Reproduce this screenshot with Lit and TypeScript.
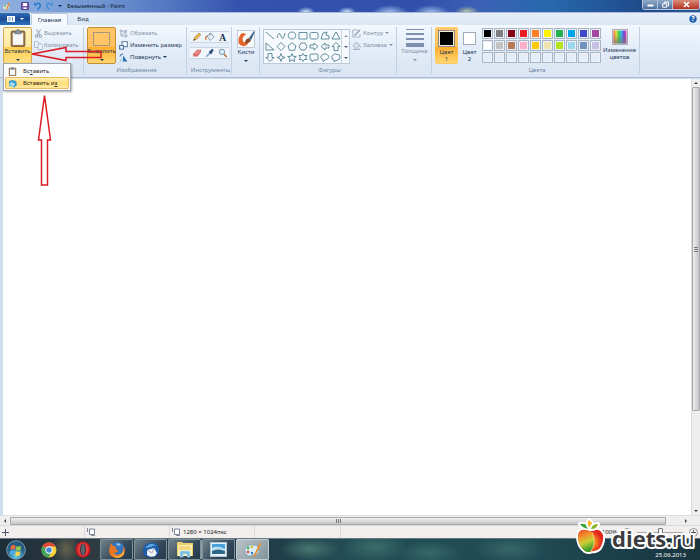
import { LitElement, html, svg, css } from "lit";
import { customElement } from "lit/decorators.js";
import { styleMap } from "lit/directives/style-map.js";

const ROW1 = ["#000000", "#7f7f7f", "#880015", "#ed1c24", "#ff7f27", "#fff200", "#22b14c", "#00a2e8", "#3f48cc", "#a349a4"];
const ROW2 = ["#ffffff", "#c3c3c3", "#b97a57", "#ffaec9", "#ffc90e", "#efe4b0", "#b5e61d", "#99d9ea", "#7092be", "#c8bfe7"];
const ROW3 = Array(10).fill("#e3ecf7");

const icon = (w: number, h: number, body: unknown) =>
  html`<svg width=${w} height=${h} viewBox="0 0 ${w} ${h}" aria-hidden="true">${body}</svg>`;

const clipboard = (w: number, h: number) => html`<svg width=${w} height=${h} viewBox="0 0 15 17" aria-hidden="true">
  <rect x="1" y="2" width="13" height="14.5" rx="1" fill="#a07848" stroke="#705634" stroke-width=".8"/>
  <rect x="2.6" y="3.6" width="9.8" height="11.4" fill="#f6f8fb"/>
  <path d="M4.5 4.5V2H6C6 0 9 0 9 2h1.5v2.5z" fill="#8b949f" stroke="#59616b" stroke-width=".6"/></svg>`;

const cut = icon(9, 9, svg`<path d="M2.500 .5L5.800 6M6.500 .5L3.200 6" stroke="#8d9db1" stroke-width="1" fill="none"/><circle cx="2.600" cy="7.100" r="1.300" fill="none" stroke="#8d9db1"/><circle cx="6.400" cy="7.100" r="1.300" fill="none" stroke="#8d9db1"/>`);
const copy = icon(9, 9, svg`<path d="M.5 .5h3l1.500 1.500v4.500h-4.500z" fill="#edf2f8" stroke="#9fb0c5" stroke-width=".8"/><path d="M4 2.800h3l1.500 1.500v4.200H4z" fill="#edf2f8" stroke="#9fb0c5" stroke-width=".8"/>`);
const crop = icon(9, 9, svg`<path d="M2 .5V7h6.500M.5 2H7v6.500M3 6l5-5" fill="none" stroke="#91a2b8" stroke-width=".9"/>`);
const resize = icon(9, 9, svg`<rect x="3" y=".7" width="5.300" height="5" fill="#fff" stroke="#45698f" stroke-width=".9"/><rect x=".6" y="4.500" width="4" height="3.700" fill="#d9e9f7" stroke="#45698f" stroke-width=".9"/>`);
const rotate = icon(9, 9, svg`<path d="M4 8.500V2.500L8.500 8.500z" fill="#2870b5"/><path d="M.5 8.500H3V4z" fill="#a9cbe8"/><path d="M1 3.500Q1 .8 4 1" fill="none" stroke="#315f8f" stroke-width=".9"/>`);
const outline = icon(9, 9, svg`<path d="M6 1H.8v7H8V5" fill="none" stroke="#a0adbd" stroke-width=".9"/><path d="M2.500 6.500L8 1" stroke="#8798ad" stroke-width="1.200"/>`);
const fill = icon(9, 9, svg`<path d="M1 4.500L4.500 1l3 3.200L4 7.500z" fill="#dbe3ec" stroke="#94a4b8" stroke-width=".8"/><path d="M1 8.300h7M7.500 4.500l1 2" stroke="#94a4b8" stroke-width="1"/>`);

const tools = [
  ["Карандаш", svg`<path d="M1.500 8.500l1-2.800L7 1l1.800 1.700L4.200 7.500z" fill="#f2bd45" stroke="#84652c" stroke-width=".6"/><path d="M1.500 8.500l.7-1.800 1 1z" fill="#333"/>`],
  ["Заливка цветом", svg`<path d="M2 4l4-3 3 4-4 3.500z" fill="#e9eff5" stroke="#6f859d" stroke-width=".7"/><path d="M2.200 4.200C.5 4.500.5 6 1 8" stroke="#d9763b" stroke-width="1.300" fill="none"/><path d="M5 1v3" stroke="#67798c" stroke-width=".7"/>`],
  ["Текст", svg`<text x="1" y="9" font-size="10" font-weight="bold" font-family="Liberation Serif, serif" fill="#203b57">A</text>`],
  ["Ластик", svg`<path d="M1 6.500L5 2h4L5.500 6.500z" fill="#f28d85" stroke="#b65b59" stroke-width=".6"/><path d="M1 6.500h4.500V8.500H1.500zM5.500 6.500L9 2v2L5.500 8.500z" fill="#d96565"/>`],
  ["Палитра", svg`<path d="M1.200 8.800L5.500 4.500" stroke="#7aa0c2" stroke-width="1.500"/><path d="M4.500 3.200l2.300 2.300M5.500 4L8 1.600" stroke="#244d7d" stroke-width="2.200"/>`],
  ["Масштаб", svg`<circle cx="4" cy="3.800" r="2.700" fill="#d6edfb" stroke="#6e8aa4" stroke-width=".9"/><path d="M6 6l2.800 3" stroke="#a96c38" stroke-width="1.500"/>`],
] as const;

const shapes: string[] = [
  "M1 1L9 8", "M1 7Q3-1 5 5T9 2", "M5 1C10 1 10 8 5 8S0 1 5 1z", "M1 1.500h8v6.500H1z", "M2.500 1.500h5q1.500 0 1.500 1.500v3.500q0 1.500-1.500 1.500h-5q-1.500 0-1.500-1.500V3q0-1.500 1.500-1.500z", "M1 8L3 2l4-1-1 3 3 1v3z", "M5 1L9 8H1z",
  "M1 1v7h8z", "M5 .5L9 4.500 5 8.500 1 4.500z", "M5 .7L9 4 7.500 8.300h-5L1 4z", "M3 1h4l2 3.500L7 8H3L1 4.500z", "M1 3h4V1l4 3.500L5 8V6H1z", "M9 3H5V1L1 4.500 5 8V6h4z", "M3 8.500v-4H1L5 .5l4 4H7v4z",
  "M3 .5v4H1l4 4 4-4H7v-4z", "M5 .5L6 3.500 9 4.500 6 5.500 5 8.500 4 5.500 1 4.500 4 3.500z", "M5 .5L6.200 3.300 9.300 3.500 7 5.500 7.700 8.500 5 7 2.300 8.500 3 5.500 .7 3.500 3.800 3.300z", "M5 .5L6.200 2.500H9L7.700 4.500 9 6.500H6.200L5 8.500 3.800 6.500H1L2.300 4.500 1 2.500H3.800z", "M2 1h6q1 0 1 1v4q0 1-1 1H5L3 8.700V7H2Q1 7 1 6V2q0-1 1-1z", "M3 8.500V6.700C-1 5 1 1 5 1s6 4.500 0 6z", "M3 8.500V7Q1 7 1 5 0 3 2.500 2 4 0 6 1.300 9 1 9 4 9.500 7 6.500 7 5 8 3 8.500z",
];

const caret = html`<i class="caret"></i>`;

@customElement("app-root")
export class AppRoot extends LitElement {
  static styles = css`
    :host { display: flex; flex-direction: column; position: relative; min-height: 100vh; overflow: hidden; background: #cfdcec;
      font: 6px/8px "Noto Sans", "Open Sans", sans-serif; color: #1e395b; }
    * { box-sizing: border-box; }
    svg { display: block; flex: none; }
    button { font: inherit; color: inherit; background: none; border: 0; padding: 0; margin: 0; display: flex; align-items: center; white-space: nowrap; }
    .caret { width: 0; height: 0; border: 2px solid transparent; border-top-color: currentColor; border-bottom: 0; flex: none; }
    .title { display: flex; height: 12px; padding-left: 2px; gap: 4px; align-items: center; color: #101a30;
      background: radial-gradient(ellipse 9px 5px at 306px 12px, #d2e8fb, transparent), radial-gradient(ellipse 9px 5px at 347px 12px, #d2e8fb, transparent), radial-gradient(ellipse 18px 8px at 390px 13px, #a6c6ed, transparent), radial-gradient(ellipse 18px 8px at 431px 13px, #a6c6ed, transparent), radial-gradient(ellipse 12px 6px at 467px 12px, #bdc7a2, transparent), linear-gradient(90deg, #8fb0e0 0, #7095d2 14%, #5377c2 24%, #3453ae 34%, #3150aa 60%, #3c60b5 68%, #2869ae 78%, #1f4a8b 92%, #2c5793); }
    .title h1 { font: inherit; margin: 0; }
    .quick { display: flex; align-items: center; gap: 5px; width: 61px; color: #17294d; }
    .window { display: flex; margin-left: auto; align-self: flex-start; border: 1px solid #b6c6dd; border-top: 0; border-radius: 0 0 3px 3px; overflow: hidden; }
    .window button { width: 15px; height: 9px; justify-content: center; background: linear-gradient(#93abc9, #4d6f9e); border-right: 1px solid #b6c6dd; }
    .window .close { width: 26px; border: 0; background: linear-gradient(#d98a79, #b6331f); }
    .tabs { display: flex; height: 13px; align-items: stretch; background: linear-gradient(#e6eef9, #dbe6f4); border-top: 1px solid #a7bbd9; padding-right: 3px; }
    .tabs button { justify-content: center; }
    .file { width: 30px; gap: 5px; color: #fff; background: linear-gradient(#2f6cb8, #1c4b94 50%, #2a75c0); border-radius: 0 2px 0 0; }
    .tabs .active { width: 37px; margin-left: 1px; background: #f6fafe; border: 1px solid #bccce0; border-bottom: 0; border-radius: 2px 2px 0 0; }
    .tabs .view { width: 30px; }
    .tabs .help { margin-left: auto; }
    .ribbon { display: grid; grid-template-columns: 84px 103px 45px 28px 137px 35px 208px 1fr; height: 53px; padding: 2px 0 3px; border-bottom: 1px solid #aebfd5;
      background: linear-gradient(#f3f8fd, #e3ecf8 45%, #dae5f3); }
    .group { display: flex; flex-direction: column; border-right: 1px solid #c3d0e1; padding-left: 3px; min-width: 0; }
    .group:last-child { border: 0; }
    .row { display: flex; flex: 1; }
    .name { text-align: center; color: #7288a5; }
    .big { flex-direction: column; width: 29px; height: 37px; border: 1px solid transparent; border-radius: 2px; }
    .big .caret { margin-top: 4px; }
    .hot { border-color: #d3a858; background: linear-gradient(#fff3bd 0, #ffe9a0 54%, #ffce4f 55%, #ffe082); padding-top: 1px; }
    .on { border-color: #c68d34; background: linear-gradient(#ffc669 0, #ffbf5d 54%, #ffad2f 55%, #ffd66f); padding-top: 2px; }
    .stack { display: flex; flex-direction: column; padding-left: 3px; }
    .stack button { height: 12px; gap: 2px; }
    .near { padding-left: 2px; }
    .near button { gap: 1px; }
    button:disabled, .dim { color: #8492a6; }
    .tools { display: grid; grid-template-columns: repeat(3, 13px); grid-auto-rows: 12px; row-gap: 4px; padding-top: 4px; align-content: start; }
    .tools button { justify-content: center; background: #f0f5fb; border: solid #c9d5e3; border-width: 1px 0; }
    .brush { padding-top: 2px; width: 22px; }
    .gallery { display: flex; align-self: flex-start; margin-top: 2px; border: 1px solid #bac9dc; background: #f7fafd; }
    .grid { display: grid; grid-template-columns: repeat(7, 11px); grid-auto-rows: 11px; }
    .grid button { justify-content: center; }
    .scroll { display: flex; flex-direction: column; justify-content: space-around; align-items: center; width: 8px; border-left: 1px solid #c9d5e3; color: #4b5f78; }
    .fills { margin-left: 1px; padding-left: 1px; }
    .lines { display: flex; flex-direction: column; gap: 3px; width: 18px; height: 18px; margin-top: 1px; }
    .lines i { background: #7f90ae; height: 1px; }
    .lines i:nth-child(2) { height: 2px; } .lines i:nth-child(3) { height: 3px; } .lines i:nth-child(4) { height: 4px; }
    .thick { width: 29px; }
    .color { flex-direction: column; width: 23px; height: 37px; border: 1px solid transparent; padding-top: 2px; line-height: 7px; border-radius: 2px; white-space: normal; }
    .color i { width: 17px; height: 17px; border: 1px solid #888; outline: 1px solid #f7ecd0; outline-offset: -2px; background: #000; margin-bottom: 2px; flex: none; }
    .color.second i { width: 13px; height: 13px; margin: 2px 2px 4px; background: #fff; outline: 0; border-color: #a0aab9; }
    .palette { display: grid; grid-template-columns: repeat(10, 11px); grid-auto-rows: 11px; gap: 1px; margin: 1px 1px 0 1px; align-content: start; }
    .palette button { border: 1px solid #a8b5c5; box-shadow: inset 0 0 0 1px #edf2f8; }
    .edit { flex-direction: column; width: 35px; padding-top: 2px; white-space: normal; }
    .edit span { margin-top: 2px; line-height: 7px; }
    .work { display: flex; flex: 1; margin-top: 1px; }
    .canvas { flex: 1; background: #fff; margin-left: 3px; }
    .vbar { display: flex; flex-direction: column; align-items: center; width: 9px; background: #eeeeef; border-left: 1px solid #dcdcdf; color: #444; }
    .arrow { display: flex; align-items: center; justify-content: center; width: 8px; height: 8px; }
    .vbar .thumb { flex: 1; width: 8px; margin-bottom: 96px; border: 1px solid #a9a9ad; border-radius: 1px; background: linear-gradient(90deg, #efeff0, #d8d8da 55%, #c3c3c8); display: flex; align-items: center; justify-content: center; }
    .up { transform: rotate(180deg); } .left { transform: rotate(90deg); } .right { transform: rotate(-90deg); }
    .hbar { display: flex; height: 10px; align-items: center; background: #eeeeef; border-top: 1px solid #dedee0; color: #444; padding: 0 10px 0 1px; }
    .hbar .thumb { flex: 1; height: 8px; margin: 0 16px 0 1px; border: 1px solid #a9a9ad; border-radius: 1px; background: linear-gradient(#efeff0, #d8d8da 55%, #c3c3c8); display: flex; align-items: center; justify-content: center; }
    .status { display: grid; grid-template-columns: 85px 85px 85px 86px 1fr; height: 13px; background: #f1eeed; border-top: 1px solid #d9d7d7; color: #222; }
    .status > * { display: flex; align-items: center; gap: 3px; border-right: 1px solid #dcd9d9; padding-left: 2px; }
    .status > .zoom { border: 0; justify-content: flex-end; gap: 6px; padding-right: 2px; }
    input { appearance: none; width: 46px; height: 9px; margin: 0; background: linear-gradient(#aaa, #aaa) center / 100% 1px no-repeat; }
    input::-webkit-slider-thumb { appearance: none; width: 5px; height: 9px; border: 1px solid #777; background: #f4f4f4; border-radius: 1px; }
    .taskbar { display: flex; height: 22px; align-items: center; gap: 1px; border-top: 1px solid #65777f; padding-right: 14px;
      background: radial-gradient(ellipse 30px 12px at 310px 10px, #47766f, transparent), radial-gradient(ellipse 32px 14px at 375px 8px, #3b6d69, transparent), radial-gradient(ellipse 30px 12px at 430px 14px, #376a69, transparent), radial-gradient(ellipse 36px 14px at 510px 10px, #376768, transparent), radial-gradient(ellipse 14px 16px at 66px 10px, #65624d, transparent), linear-gradient(90deg, #1d2d38, #2e3c42 14%, #1f3542 34%, #234e56 50%, #204b56 75%, #18343f); }
    .taskbar button { width: 33px; height: 21px; justify-content: center; }
    .taskbar .open { border: 1px solid #7f9199; border-radius: 1px; background: linear-gradient(135deg, #71828b, #34495a 60%, #23394d); }
    .taskbar .current { background: linear-gradient(135deg, #bac3c7, #82939b); border-color: #c2ced3; }
    .taskbar .start { width: 31px; }
    .taskbar .multi { box-shadow: 2px 0 0 -1px #8b9ba3; }
    .tray { margin-left: auto; align-self: stretch; display: flex; flex-direction: column; justify-content: flex-end; align-items: flex-end; color: #fff; padding-bottom: 1px; }
    .menu { position: absolute; left: 3px; top: 63px; width: 68px; border: 1px solid #a0a7b0; background: #fafbfc; box-shadow: 1px 1px 2px #0005; z-index: 2; padding: 1px; color: #2a2a2a; }
    .menu button { width: 100%; height: 12px; padding-left: 2px; gap: 6px; border: 1px solid transparent; }
    .menu .sel { background: linear-gradient(#fff0b5, #ffdc74 50%, #ffe9a3); border-color: #e7bd64; border-radius: 1px; }
    .marks { position: absolute; left: 0; top: 0; z-index: 3; pointer-events: none; }
    .brand { position: absolute; right: 0; bottom: 0; z-index: 3; pointer-events: none; }
  `;

  private swatch(c: string) {
    return html`<button aria-label=${c} style=${styleMap({ backgroundColor: c })}></button>`;
  }

  private sizeIcon() {
    return icon(8, 8, svg`<path d="M2.500 1h5v5.500h-5z" fill="#fff" stroke="#59687d" stroke-width=".8"/><path d="M.5 0v4M4 7.600h4" stroke="#59687d" stroke-width=".8"/>`);
  }

  render() {
    return html`
      <header class="title">
        <div class="quick">
          ${icon(9, 9, svg`<ellipse cx="4" cy="5" rx="3.500" ry="3" fill="#dbe8f3" stroke="#7d97b8" stroke-width=".6"/><circle cx="3" cy="4" r=".9" fill="#5ca84c"/><path d="M4 8L7.500 1" stroke="#e8923a" stroke-width="1.500"/>`)}
          <i></i>
          ${icon(8, 8, svg`<rect x=".5" y=".5" width="7" height="7" rx=".5" fill="#8060b4" stroke="#553f8d"/><path d="M2 1h4v3H2zM2.500 5.500h3V7h-3z" fill="#fff"/>`)}
          ${icon(7, 8, svg`<path d="M2 2.500Q6-.5 6.300 3.500 6 6 3.500 7.500" fill="none" stroke="#2878d0" stroke-width="1.500"/><path d="M0 3.500V0l3 3.500z" fill="#2878d0"/>`)}
          ${icon(7, 8, svg`<path d="M5 2.500Q1-.5 .8 3.500 1 6 3.500 7.500" fill="none" stroke="#3d8dda" stroke-width="1.500"/><path d="M7 3.500V0L4 3.500z" fill="#3d8dda"/>`)}
          ${caret}
        </div>
        <h1>Безымянный - Paint</h1>
        <div class="window">
          <button aria-label="Свернуть">${icon(7, 7, svg`<rect x=".5" y="3.500" width="6" height="2" fill="#fff"/>`)}</button>
          <button aria-label="Развернуть">${icon(7, 7, svg`<path d="M2.500 2V1h4v4h-1M.7 2.700h4v3.500h-4z" fill="none" stroke="#fff"/>`)}</button>
          <button class="close" aria-label="Закрыть">${icon(7, 7, svg`<path d="M1 1l5 5M6 1L1 6" stroke="#fff" stroke-width="1.600"/>`)}</button>
        </div>
      </header>
      <nav class="tabs">
        <button class="file" aria-label="Файл">${icon(8, 6, svg`<rect width="8" height="6" fill="#fff"/><path d="M1 2h3M1 4h3M5.500 1v4" stroke="#4a7cbc" stroke-width=".8"/>`)}${caret}</button>
        <button class="active">Главная</button>
        <button class="view">Вид</button>
        <button class="help" aria-label="Справка">${icon(8, 8, svg`<circle cx="4" cy="4" r="3.700" fill="#2361ae"/><text x="2.200" y="6.400" font-size="7" font-weight="bold" fill="#fff">?</text>`)}</button>
      </nav>
      <section class="ribbon">
        <div class="group">
          <div class="row">
            <button class="big hot">${clipboard(16, 18)}<span>Вставить</span>${caret}</button>
            <div class="stack near">
              <button disabled>${cut}Вырезать</button>
              <button disabled>${copy}Копировать</button>
            </div>
          </div>
        </div>
        <div class="group">
          <div class="row">
            <button class="big on">${icon(17, 17, svg`<rect x=".5" y="2.500" width="16" height="13" fill="#ffc566" stroke="#57708c" stroke-width=".8" stroke-dasharray="1.500 .7"/>`)}<span>Выделить</span>${caret}</button>
            <div class="stack">
              <button disabled>${crop}Обрезать</button>
              <button>${resize}Изменить размер</button>
              <button>${rotate}Повернуть ${caret}</button>
            </div>
          </div>
          <div class="name">Изображение</div>
        </div>
        <div class="group">
          <div class="row"><div class="tools">${tools.map(([n, b]) => html`<button aria-label=${n}>${icon(10, 10, b)}</button>`)}</div></div>
          <div class="name">Инструменты</div>
        </div>
        <div class="group">
          <button class="big brush">${icon(18, 18, svg`<rect x=".5" y=".5" width="17" height="17" fill="#f7f9fb" stroke="#c2ccd8"/><path d="M1.500 9Q4 0 9.500 4.500 4.500 6 6 11q2 3 5 0v3q-6 5-9.500-1z" fill="#e4642b"/><path d="M8 13q0-4 4-5l2 2q-2 4-6 3z" fill="#8a4b2c"/><path d="M12 8l5-7 .8 1L14 10z" fill="#38648d"/>`)}<span>Кисти</span>${caret}</button>
        </div>
        <div class="group">
          <div class="row">
            <div class="gallery">
              <div class="grid">${shapes.map((d, i) => html`<button aria-label="Фигура ${i + 1}">${icon(10, 9, svg`<path d=${d} fill="none" stroke="#3f7487" stroke-width=".8"/>`)}</button>`)}</div>
              <div class="scroll"><i class="caret up dim"></i>${caret}${caret}</div>
            </div>
            <div class="stack fills">
              <button disabled>${outline}Контур ${caret}</button>
              <button disabled>${fill}Заливка ${caret}</button>
            </div>
          </div>
          <div class="name">Фигуры</div>
        </div>
        <div class="group">
          <button class="big thick" disabled><span class="lines"><i></i><i></i><i></i><i></i></span><span>Толщина</span>${caret}</button>
        </div>
        <div class="group">
          <div class="row">
            <button class="color on"><i></i>Цвет<br>1</button>
            <button class="color second"><i></i>Цвет<br>2</button>
            <div class="palette">${[...ROW1, ...ROW2, ...ROW3].map((c) => this.swatch(c))}</div>
            <button class="edit">${icon(16, 16, svg`<defs><linearGradient id="rainbow"><stop offset="0" stop-color="#f0503c"/><stop offset=".2" stop-color="#e8e23a"/><stop offset=".42" stop-color="#38c84c"/><stop offset=".6" stop-color="#34b8e8"/><stop offset=".8" stop-color="#7444d0"/><stop offset="1" stop-color="#e044a8"/></linearGradient><linearGradient id="shade" x2="0" y2="1"><stop offset=".3" stop-color="#777" stop-opacity="0"/><stop offset="1" stop-color="#777" stop-opacity=".8"/></linearGradient></defs><rect x=".5" y=".5" width="15" height="15" fill="#fff" stroke="#aab"/><rect x="1.500" y="1.500" width="13" height="13" fill="url(#rainbow)"/><rect x="1.500" y="1.500" width="13" height="13" fill="url(#shade)"/>`)}<span>Изменение<br>цветов</span></button>
          </div>
          <div class="name">Цвета</div>
        </div>
        <div class="group"></div>
      </section>
      <main class="work">
        <div class="canvas"></div>
        <div class="vbar"><span class="arrow"><i class="caret up"></i></span><span class="thumb">${icon(4, 5, svg`<path d="M0 .5h4M0 2.500h4M0 4.500h4" stroke="#777"/>`)}</span><span class="arrow">${caret}</span></div>
      </main>
      <div class="hbar"><span class="arrow"><i class="caret left"></i></span><span class="thumb">${icon(5, 4, svg`<path d="M.5 0v4M2.500 0v4M4.500 0v4" stroke="#777"/>`)}</span><span class="arrow"><i class="caret right"></i></span></div>
      <footer class="status">
        <span>${icon(7, 7, svg`<path d="M3.500 0v7M0 3.500h7" stroke="#4d5668"/>`)}</span>
        <span>${this.sizeIcon()}</span>
        <span>${this.sizeIcon()}1280 × 1024пкс</span>
        <span></span>
        <label class="zoom">100%
          ${icon(8, 8, svg`<circle cx="4" cy="4" r="3.500" fill="#f8f8f8" stroke="#777" stroke-width=".8"/><path d="M2 4h4" stroke="#555"/>`)}
          <input type="range" aria-label="Масштаб" value="50">
          ${icon(9, 9, svg`<circle cx="4.500" cy="4.500" r="4" fill="#f8f8f8" stroke="#777" stroke-width=".8"/><path d="M2 4.500h5M4.500 2v5" stroke="#555"/>`)}
        </label>
      </footer>
      <footer class="taskbar">
        <button class="start" aria-label="Пуск">${icon(20, 20, svg`<defs><radialGradient id="orb" cy=".8"><stop offset="0" stop-color="#6bd5ee"/><stop offset="1" stop-color="#255a83"/></radialGradient></defs><circle cx="10" cy="10" r="9.300" fill="url(#orb)" stroke="#8fb4c9" stroke-width=".8"/><path d="M5 6q2-1.500 4.500-.5L9 9.500Q6.500 8.500 4.500 10z" fill="#ee6b35"/><path d="M10.500 6q2 1 4.500 0l-.6 4q-2.300 1-4.400 0z" fill="#96cc48"/><path d="M4.300 11q2-1.400 4.500-.3L8.300 14.500Q6 13.500 3.800 15z" fill="#4faaea"/><path d="M9.800 11.200q2 1 4.500 0l-.6 4q-2.300 1-4.400 0z" fill="#ffd343"/>`)}</button>
        <button aria-label="Chrome">${icon(16, 16, svg`<circle cx="8" cy="8" r="7.500" fill="#f7ce3c"/><path d="M8 8L1.500 4.200A7.500 7.500 0 0 1 14.600 4.500H8z" fill="#df4937"/><path d="M8 8L1.500 4.200A7.500 7.500 0 0 0 7.500 15.500L11 9.500z" fill="#42a35a"/><circle cx="8" cy="8" r="3.700" fill="#fff"/><circle cx="8" cy="8" r="2.800" fill="#4787d4"/>`)}</button>
        <button aria-label="Opera">${icon(16, 17, svg`<ellipse cx="8" cy="8.500" rx="7.500" ry="8" fill="#c4141d"/><ellipse cx="8" cy="8.500" rx="5.700" ry="7" fill="#e23b3c"/><ellipse cx="8" cy="8.500" rx="2.800" ry="6" fill="#2d2831"/><ellipse cx="8" cy="8.500" rx="2" ry="5.700" fill="#59636a"/>`)}</button>
        <button class="open" aria-label="Firefox">${icon(18, 18, svg`<circle cx="9" cy="8.500" r="7.500" fill="#3376bd"/><path d="M3 2L1.500 7Q-.5 16 8.500 17.200 17 17 17 8.500L15 4q1.500 7-3 9-4 2-6-1l3.500-1Q11 9.500 7.500 8L8 5.500 5 5z" fill="#ea7623"/><path d="M4 13q4 4 9 .5 2-2 2-4 3 4-2 6.500-5 2.500-9-3z" fill="#f6b33b"/><path d="M8 3q3-2 5 1l-3 1z" fill="#8dc3ec"/>`)}</button>
        <button class="open" aria-label="Thunderbird">${icon(18, 16, svg`<path d="M1 9Q1 2 8 1q7-1 9 5 1 9-8 9.500Q1 15 1 9z" fill="#1c5ba7"/><path d="M3 6Q8-1 15 4q-4-1-6 1z" fill="#5ca8e6"/><path d="M5 8l7-2 3 5-2 3q-5 2-8-1z" fill="#f1f4f7"/><path d="M5 8l5 3 2-5" fill="none" stroke="#7d92a8" stroke-width=".7"/>`)}</button>
        <button class="open multi" aria-label="Проводник">${icon(18, 17, svg`<path d="M1 1h5l1 1h10v13H1z" fill="#e9cf70"/><path d="M2 4h14v11H2z" fill="#fff2ae"/><path d="M3 6h12M3 8h12" stroke="#e4be55"/><path d="M4 16v-5q0-1 1-1h8q1 0 1 1v5h-3v-3H7v3z" fill="#7ebde2" stroke="#bde1f4" stroke-width=".6"/>`)}</button>
        <button class="open" aria-label="Изображения">${icon(17, 15, svg`<rect x=".5" y=".5" width="16" height="14" fill="#e6f0f7" stroke="#acc4d4"/><path d="M2 2h13v10H2z" fill="#4ba1d9"/><path d="M2 6q5-3 13 1v2H2z" fill="#b9e2f4"/><path d="M2 9q6-3 13 0v3H2z" fill="#2b6787"/>`)}</button>
        <button class="open current" aria-label="Paint">${icon(18, 17, svg`<path d="M1 9q0-5 7-5 7 0 7 5 0 5-5 5-2-1-3 1-6 0-6-6z" fill="#d7effb" stroke="#79a6be" stroke-width=".7"/><circle cx="4" cy="7" r="1.400" fill="#57a457"/><circle cx="8" cy="6" r="1.400" fill="#e6bf3e"/><circle cx="4" cy="11" r="1.400" fill="#dc5546"/><circle cx="8" cy="12" r="1.200" fill="#3c72c5"/><path d="M9 16L15 3l2-2 0 3L11 16z" fill="#df9345"/>`)}</button>
        <div class="tray"><time datetime="2013-06-25">25.06.2013</time></div>
      </footer>
      <div class="menu" role="menu">
        <button role="menuitem">${clipboard(9, 9)}<span>Вс<u>т</u>авить</span></button>
        <button role="menuitem" class="sel">${icon(9, 9, svg`<path d="M1 2l3-1 4 1 1 4-3 2.500-5-2z" fill="#3c9bd0"/><path d="M1 5l3-2 3 2-2 3z" fill="#a8dff4"/>`)}<span>Вставить и<u>з</u></span></button>
      </div>
      <svg class="marks" width="110" height="190" viewBox="0 0 110 190" aria-hidden="true" fill="none" stroke="#dc1c24" stroke-width="1.500">
        <path d="M32 54L66 47.500V51.500H101V57.500H66V60.500z"/>
        <path d="M44.500 95.500L50.500 140H47.500V185H41.500V140H38.500z"/>
      </svg>
      <svg class="brand" width="130" height="46" viewBox="0 0 130 46" role="img" aria-label="diets.ru">
        <defs>
          <linearGradient id="lobe" x2=".3" y2="1"><stop offset="0" stop-color="#ee4526"/><stop offset=".35" stop-color="#f4912a"/><stop offset=".65" stop-color="#c9cf35"/><stop offset="1" stop-color="#3c9f2c"/></linearGradient>
          <radialGradient id="fruit" cx=".45" cy=".55"><stop offset="0" stop-color="#ffc93a"/><stop offset=".55" stop-color="#f67a20"/><stop offset="1" stop-color="#e3271c"/></radialGradient>
        </defs>
        <g stroke="#fff" stroke-width="4" stroke-linejoin="round" paint-order="stroke">
          <path d="M20 17Q9 13 8 22 8 32 15 37q4 2 7 0 4 1 8-3 4-7 3-13-3-8-13-4z" fill="url(#fruit)"/>
          <path d="M19 15Q12 14 10 10q7-1 9 5z" fill="#3ca23a"/><path d="M20 14Q16 10 19 6q5 3 2 8z" fill="#ffb323"/><path d="M21 15q1-5 7-5-1 5-7 5z" fill="#8fb52c"/>
        </g>
        <path d="M22 18Q9 12 8 22 8 32 15 37q3 2 6 0 6-9 1-19z" fill="url(#lobe)"/>
        <path d="M22 18q5 10-1 19" fill="none" stroke="#fff3b0" stroke-width=".6"/>
        <g font-family="Open Sans, Noto Sans, sans-serif" font-size="22" fill="#3c3c3e" stroke="#fff" stroke-width="4" stroke-linejoin="round" paint-order="stroke">
          <text x="42" y="33"><tspan font-weight="bold">diets</tspan><tspan font-weight="400">.ru</tspan></text>
        </g>
      </svg>
    `;
  }
}
